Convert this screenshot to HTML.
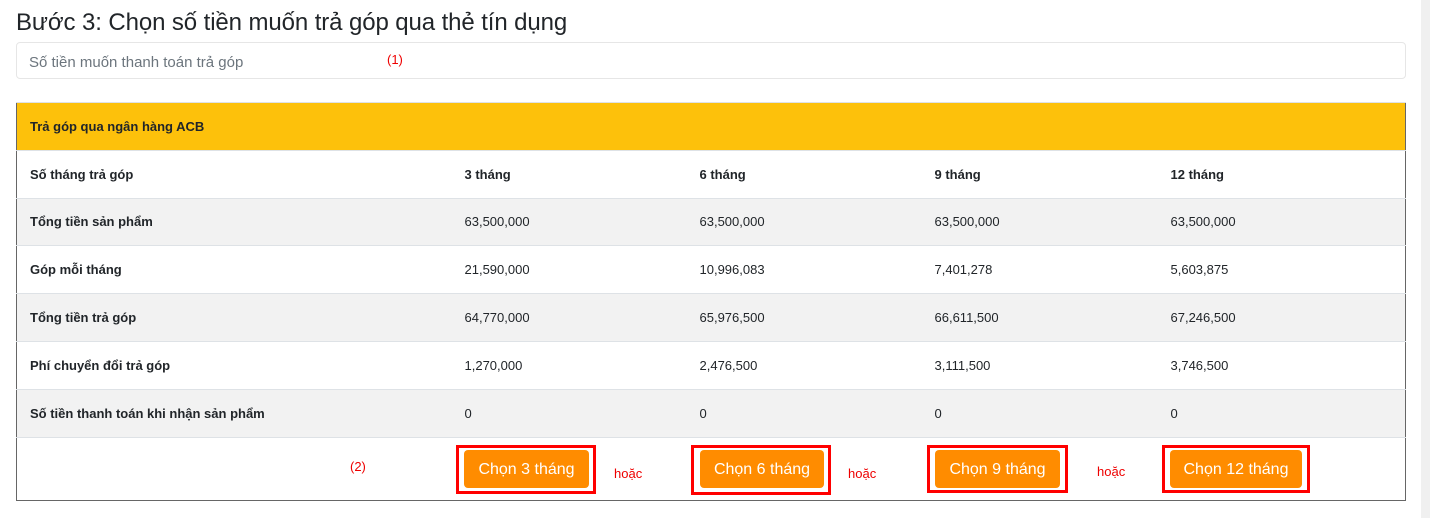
<!DOCTYPE html>
<html><head><meta charset="utf-8"><style>
body{margin:0;width:1430px;height:518px;background:#fff;font-family:"Liberation Sans","DejaVu Sans",sans-serif;position:relative;overflow:hidden;color:#212529}
.sb{position:absolute;left:1421px;top:0;width:9px;height:518px;background:#f0f0f0}
h1{position:absolute;left:16px;top:9px;margin:0;font-weight:400;font-size:24px;color:#212529;letter-spacing:-0.1px}
.inp{position:absolute;left:16px;top:42px;width:1390px;height:37px;border:1px solid #e6e6e6;border-radius:4px;box-sizing:border-box}
.inp span{position:absolute;left:12px;top:11px;font-size:15px;color:#6c757d}
.red{color:#e00;font-size:13px;position:absolute}
table{position:absolute;left:16px;top:102px;width:1390px;border-collapse:collapse;font-size:13px;border-left:1px solid #666;border-right:1px solid #666;border-bottom:1px solid #666}
td{height:46.8px;padding:0 0 0 13px;border-top:1px solid #dee2e6;vertical-align:middle}
tr.h td{background:#fdc10b;font-weight:bold;border-top:1px solid #dee2e6}
tr.g td{background:#f2f2f2}
td.b{font-weight:bold}
tr.last td{height:62px}
.box{position:absolute;border:3px solid #f00;box-sizing:border-box;top:445px}
.btn{position:absolute;background:#ff8c00;color:#fff;font-size:16px;border-radius:4px;height:38px;line-height:40px;text-align:center;top:450px}
</style></head><body>
<div class="sb"></div>
<h1>Bước 3: Chọn số tiền muốn trả góp qua thẻ tín dụng</h1>
<div class="inp"><span>Số tiền muốn thanh toán trả góp</span></div>
<div class="red" style="left:387px;top:52px">(1)</div>
<table>
<colgroup><col style="width:435px"><col style="width:235px"><col style="width:235px"><col style="width:236px"><col></colgroup>
<tr class="h"><td colspan="5">Trả góp qua ngân hàng ACB</td></tr>
<tr><td class="b">Số tháng trả góp</td><td class="b">3 tháng</td><td class="b">6 tháng</td><td class="b">9 tháng</td><td class="b">12 tháng</td></tr>
<tr class="g"><td class="b">Tổng tiền sản phẩm</td><td>63,500,000</td><td>63,500,000</td><td>63,500,000</td><td>63,500,000</td></tr>
<tr><td class="b">Góp mỗi tháng</td><td>21,590,000</td><td>10,996,083</td><td>7,401,278</td><td>5,603,875</td></tr>
<tr class="g"><td class="b">Tổng tiền trả góp</td><td>64,770,000</td><td>65,976,500</td><td>66,611,500</td><td>67,246,500</td></tr>
<tr><td class="b">Phí chuyển đổi trả góp</td><td>1,270,000</td><td>2,476,500</td><td>3,111,500</td><td>3,746,500</td></tr>
<tr class="g"><td class="b">Số tiền thanh toán khi nhận sản phẩm</td><td>0</td><td>0</td><td>0</td><td>0</td></tr>
<tr class="last"><td></td><td></td><td></td><td></td><td></td></tr>
</table>
<div class="red" style="left:350px;top:459px">(2)</div>
<div class="box" style="left:456px;width:140px;height:49px"></div><div class="btn" style="left:464px;width:125px">Chọn 3 tháng</div>
<div class="red" style="left:614px;top:466px">hoặc</div>
<div class="box" style="left:691px;width:140px;height:50px"></div><div class="btn" style="left:700px;width:124px">Chọn 6 tháng</div>
<div class="red" style="left:848px;top:466px">hoặc</div>
<div class="box" style="left:927px;width:141px;height:48px"></div><div class="btn" style="left:935px;width:125px">Chọn 9 tháng</div>
<div class="red" style="left:1097px;top:464px">hoặc</div>
<div class="box" style="left:1162px;width:148px;height:48px"></div><div class="btn" style="left:1170px;width:132px">Chọn 12 tháng</div>
</body></html>
